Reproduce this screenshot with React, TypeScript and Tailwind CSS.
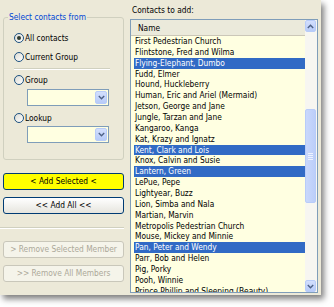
import React from "react";

const names = [
  "First Pedestrian Church",
  "Flintstone, Fred and Wilma",
  "Flying-Elephant, Dumbo",
  "Fudd, Elmer",
  "Hound, Huckleberry",
  "Human, Eric and Ariel (Mermaid)",
  "Jetson, George and Jane",
  "Jungle, Tarzan and Jane",
  "Kangaroo, Kanga",
  "Kat, Krazy and Ignatz",
  "Kent, Clark and Lois",
  "Knox, Calvin and Susie",
  "Lantern, Green",
  "LePue, Pepe",
  "Lightyear, Buzz",
  "Lion, Simba and Nala",
  "Martian, Marvin",
  "Metropolis Pedestrian Church",
  "Mouse, Mickey and Minnie",
  "Pan, Peter and Wendy",
  "Parr, Bob and Helen",
  "Pig, Porky",
  "Pooh, Winnie",
  "Prince Phillip and Sleeping (Beauty)",
];
const selected = new Set([2, 10, 12, 19]);

function Radio({ checked, label }: { checked?: boolean; label: string }) {
  return (
    <div className="flex items-center h-[12px] pl-[10px] gap-[1px]">
      <div className="w-[10px] h-[10px] rounded-full border border-[#1C5180] bg-gradient-to-br from-[#DCDBD3] to-white flex items-center justify-center">
        {checked && <div className="w-[4px] h-[4px] rounded-full bg-[#2E3A2E]" />}
      </div>
      <span className="leading-[12px]">{label}</span>
    </div>
  );
}

function Chevron({ up }: { up?: boolean }) {
  return (
    <svg width="7" height="5" viewBox="0 0 7 5">
      <path
        d={up ? "M0.8 4 L3.5 1.3 L6.2 4" : "M0.8 1 L3.5 3.7 L6.2 1"}
        fill="none"
        stroke="#4D6185"
        strokeWidth="1.4"
      />
    </svg>
  );
}

function Combo() {
  return (
    <div className="ml-[23px] w-[82px] h-[17px] border border-[#7F9DB9] bg-[#FFFFE1] flex justify-end p-[1px]">
      <div className="w-[12px] h-full rounded-[2px] border border-[#B8CCF9] bg-gradient-to-b from-[#D3DFFD] to-[#B7CBF8] flex items-center justify-center">
        <Chevron />
      </div>
    </div>
  );
}

export default function App() {
  return (
    <div
      className="w-[334px] h-[307px] bg-white text-black text-[8.3px]"
      style={{ fontFamily: '"DejaVu Sans Condensed", "Liberation Sans", sans-serif' }}
    >
      <div className="w-[321px] h-[295px] bg-[#ECE9D8] shadow-[3px_4px_6px_rgba(0,0,0,0.5)] flex">
        {/* Left column */}
        <div className="ml-[3px] w-[121px] flex flex-col">
          <fieldset className="mt-[12px] h-[148px] border border-[#D0D0BF] rounded-[3px] min-w-0">
            <legend className="ml-[4px] px-[1px] leading-[10px] text-[#0046D5]">Select contacts from</legend>
            <div className="mt-[10px]">
              <Radio checked label="All contacts" />
            </div>
            <div className="mt-[7px]">
              <Radio label="Current Group" />
            </div>
            <div className="mt-[5px] ml-[10px] w-[96px] border-t border-[#D0D0BF] border-b border-b-white" />
            <div className="mt-[4px]">
              <Radio label="Group" />
            </div>
            <div className="mt-[3px]">
              <Combo />
            </div>
            <div className="mt-[6px]">
              <Radio label="Lookup" />
            </div>
            <div className="mt-[2px]">
              <Combo />
            </div>
          </fieldset>
          <div className="mt-[13px] h-[17px] rounded-[3px] border border-[#003C74] bg-[#FFFF00] flex items-center justify-center">
            &lt; Add Selected &lt;
          </div>
          <div className="mt-[7px] h-[17px] rounded-[3px] border border-[#003C74] bg-gradient-to-b from-white to-[#E6E5DE] flex items-center justify-center">
            &lt;&lt; Add All &lt;&lt;
          </div>
          <div className="mt-[13px] -ml-[3px] w-[124px] border-t border-[#D0D0BF] border-b border-b-white" />
          <div className="mt-[12px] h-[17px] rounded-[3px] border border-[#C9C7BA] bg-[#F5F4EA] text-[#ACA899] flex items-center justify-center">
            &gt; Remove Selected Member
          </div>
          <div className="mt-[7px] h-[17px] rounded-[3px] border border-[#C9C7BA] bg-[#F5F4EA] text-[#ACA899] flex items-center justify-center">
            &gt;&gt; Remove All Members
          </div>
        </div>

        {/* Right column */}
        <div className="ml-[6px] w-[188px] flex flex-col">
          <div className="h-[19px] pl-[2px] pt-[5px] leading-[10px]">Contacts to add:</div>
          <div className="h-[274px] border border-[#7F9DB9] bg-[#FFFFE1] flex">
            <div className="flex-1 min-w-0 flex flex-col overflow-hidden">
              <div className="h-[16px] shrink-0 bg-[#EBEADB] border-b border-[#CBC7B8] flex items-center pl-[7px] leading-[10px]">
                Name
              </div>
              <div className="flex flex-col">
                {names.map((n, i) => (
                  <div key={n} className="h-[10.86px] shrink-0 pl-[3px] flex">
                    <div
                      className={
                        "flex-1 pl-[1px] leading-[10.86px] whitespace-nowrap overflow-hidden " +
                        (selected.has(i) ? "bg-[#316AC5] text-white" : "")
                      }
                    >
                      {n}
                    </div>
                  </div>
                ))}
              </div>
            </div>
            {/* Scrollbar */}
            <div className="w-[12px] shrink-0 bg-[#F7F6F1] flex flex-col pr-[1px]">
              <div className="h-[12px] rounded-[2px] border border-[#B8CCF9] bg-gradient-to-b from-[#D3DFFD] to-[#B7CBF8] flex items-center justify-center">
                <Chevron up />
              </div>
              <div className="mt-[77px] h-[94px] rounded-[2px] border border-[#B8CCF9] bg-gradient-to-r from-[#C9D8FC] to-[#BCCEF9] flex flex-col items-center justify-center gap-[1px]">
                <div className="w-[5px] h-[1px] bg-[#EEF3FE]" />
                <div className="w-[5px] h-[1px] bg-[#EEF3FE]" />
                <div className="w-[5px] h-[1px] bg-[#EEF3FE]" />
                <div className="w-[5px] h-[1px] bg-[#EEF3FE]" />
              </div>
              <div className="flex-1" />
              <div className="h-[12px] rounded-[2px] border border-[#B8CCF9] bg-gradient-to-b from-[#D3DFFD] to-[#B7CBF8] flex items-center justify-center">
                <Chevron />
              </div>
            </div>
          </div>
        </div>
      </div>
    </div>
  );
}
